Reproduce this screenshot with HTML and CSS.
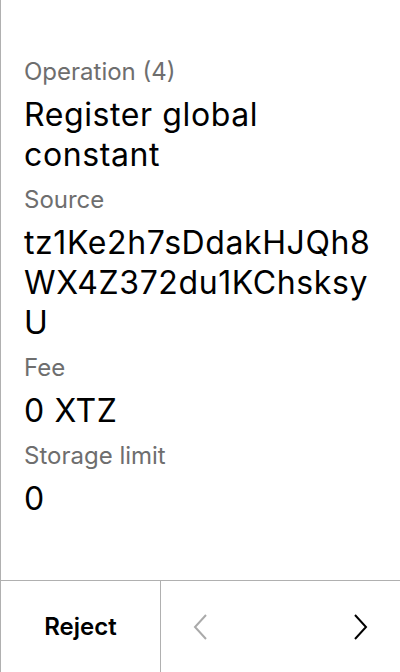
FILE: index.html
```html
<!DOCTYPE html>
<html>
<head>
<meta charset="utf-8">
<link rel="stylesheet" href="styles.css">
</head>
<body>
<div class="screen">
  <main class="content">
    <div class="field">
      <div class="label">Operation (4)</div>
      <div class="value">Register global constant</div>
    </div>
    <div class="field">
      <div class="label">Source</div>
      <div class="value break">tz1Ke2h7sDdakHJQh8WX4Z372du1KChsksyU</div>
    </div>
    <div class="field">
      <div class="label">Fee</div>
      <div class="value">0 XTZ</div>
    </div>
    <div class="field">
      <div class="label">Storage limit</div>
      <div class="value">0</div>
    </div>
  </main>
  <footer class="footer">
    <div class="reject">Reject</div>
    <div class="nav">
      <svg class="chev" width="14" height="26" viewBox="0 0 14 26"><path d="M13 1 L2 13 L13 25" fill="none" stroke="#aaaaaa" stroke-width="2"/></svg>
      <svg class="chev" width="14" height="26" viewBox="0 0 14 26"><path d="M1 1 L12 13 L1 25" fill="none" stroke="#000" stroke-width="2"/></svg>
    </div>
  </footer>
</div>
</body>
</html>
```
FILE: styles.css
```css
html, body { margin: 0; padding: 0; background: #fff; }
.screen {
  width: 400px; height: 672px; box-sizing: border-box;
  border-left: 1px solid #b0b0b0;
  display: flex; flex-direction: column;
  font-family: Inter, "Noto Sans", sans-serif;
  color: #000;
}
.content {
  flex: 1; padding: 56px 23px 0 23px;
  display: flex; flex-direction: column; gap: 9px;
}
.field { display: flex; flex-direction: column; gap: 7px; }
.label { font-size: 24px; line-height: 32px; color: #6e6e6e; }
.value { font-size: 32px; line-height: 40px; letter-spacing: 0.6px; }
.break { word-break: break-all; }
.footer {
  height: 92px; border-top: 1px solid #b0b0b0;
  display: flex; box-sizing: border-box;
}
.reject {
  width: 159px; border-right: 1px solid #b0b0b0;
  display: flex; align-items: center; justify-content: center;
  font-size: 24px; font-weight: 600;
}
.nav { flex: 1; display: flex; align-items: center; justify-content: space-between; padding: 0 32px 0 32px; }
.chev { display: block; }
```
